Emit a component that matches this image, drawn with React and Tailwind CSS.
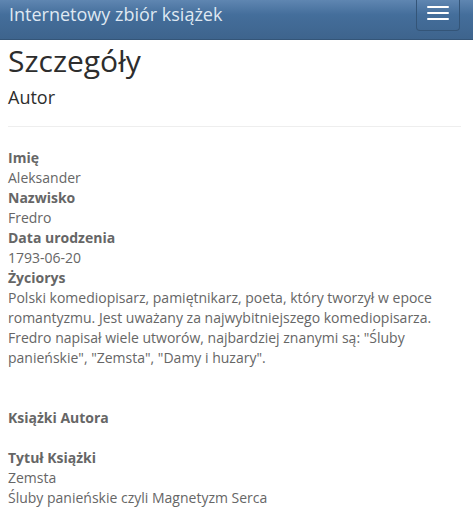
export default function App() {
  const font = { fontFamily: '"Open Sans", "DejaVu Sans", sans-serif' };
  return (
    <div className="min-h-[512px] bg-white text-[14px] leading-[20px] text-[#666666]" style={font}>
      <nav className="h-[40px] flex items-start justify-between border-b border-[#345578] bg-[linear-gradient(to_bottom,#5f86b1,#446e9b_38%,#3e648d)]">
        <div className="pl-[9px] pt-[4px] text-[18px] leading-[20px] text-[#dfe8f2]">Internetowy zbiór książek</div>
        <div className="mr-[13px] w-[44px] h-[31px] border-x border-b border-[#345578] rounded-b-[4px] flex flex-col items-center pt-[6px] gap-[4px]">
          <span className="block w-[22px] h-[2px] rounded-[1px] bg-white"></span>
          <span className="block w-[22px] h-[2px] rounded-[1px] bg-white"></span>
          <span className="block w-[22px] h-[2px] rounded-[1px] bg-white"></span>
        </div>
      </nav>
      <main className="pl-[8px] pr-[12px]">
        <h2 className="mt-[4px] text-[30px] leading-[33px] text-[#2d2d2d]">Szczegóły</h2>
        <h4 className="mt-[10px] text-[18px] leading-[20px] text-[#2d2d2d]">Autor</h4>
        <hr className="mt-[19px] border-0 border-t border-[#eeeeee]" />
        <dl className="mt-[21px]">
          <dt className="font-bold">Imię</dt>
          <dd>Aleksander</dd>
          <dt className="font-bold">Nazwisko</dt>
          <dd>Fredro</dd>
          <dt className="font-bold">Data urodzenia</dt>
          <dd>1793-06-20</dd>
          <dt className="font-bold">Życiorys</dt>
          <dd>Polski komediopisarz, pamiętnikarz, poeta, który tworzył w epoce romantyzmu. Jest uważany za najwybitniejszego komediopisarza. Fredro napisał wiele utworów, najbardziej znanymi są: "Śluby panieńskie", "Zemsta", "Damy i huzary".</dd>
        </dl>
        <div className="mt-[40px] font-bold">Książki Autora</div>
        <div className="mt-[20px]">
          <div className="font-bold">Tytuł Książki</div>
          <div>Zemsta</div>
          <div>Śluby panieńskie czyli Magnetyzm Serca</div>
        </div>
      </main>
    </div>
  );
}
